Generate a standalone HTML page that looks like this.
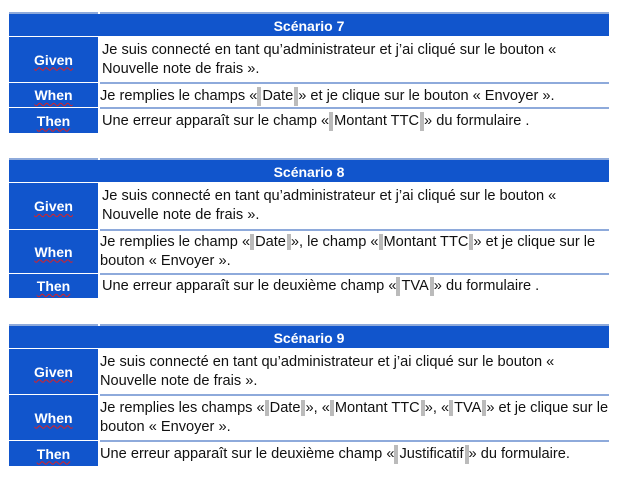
<!DOCTYPE html>
<html><head><meta charset="utf-8"><style>
body{margin:0;width:617px;height:483px;background:#fff;font-family:"Liberation Sans",sans-serif;position:relative;overflow:hidden}
.t{position:absolute;left:9px;width:600px}
.h{position:absolute;left:0;width:600px;height:24px;background:#1155cc;color:#fff;font-weight:bold;font-size:14px;text-align:center;line-height:24px;border-top:2px solid #8eaadb;box-sizing:border-box}
.h:before{content:"";position:absolute;left:89px;top:-2px;width:2px;height:2px;background:#fff}
.l{position:absolute;left:0;width:89px;background:#1155cc;color:#fff;font-weight:bold;font-size:14px;display:flex;align-items:center;justify-content:center}
.l span{text-decoration:underline wavy #e02020;text-decoration-thickness:1px;text-underline-offset:2px}
.c{position:absolute;left:91px;width:509px;font-size:14.6px;color:#111;line-height:19px;display:flex;align-items:center;padding-left:2px;box-sizing:border-box;white-space:nowrap}
.sep{position:absolute;left:91px;width:509px;height:2px;background:#8eaadb}
.f{border-left:4px solid #bbb;border-right:4px solid #bbb;padding:0 1px}
</style></head><body>

<div class="t" style="top:12px">
<div class="h" style="top:0">Scénario 7</div>
<div class="l" style="top:25px;height:45px"><span>Given</span></div>
<div class="c" style="top:25px;height:45px">Je suis connecté en tant qu’administrateur et j’ai cliqué sur le bouton «<br>Nouvelle note de frais ».</div>
<div class="sep" style="top:70px"></div>
<div class="l" style="top:71px;height:24px"><span>When</span></div>
<div class="c" style="top:72px;height:24px;padding-left:0">Je remplies le champs «<span class="f">Date</span>» et je clique sur le bouton « Envoyer ».</div>
<div class="sep" style="top:95px"></div>
<div class="l" style="top:96px;height:25px"><span>Then</span></div>
<div class="c" style="top:97px;height:24px">Une erreur apparaît sur le champ «<span class="f">Montant TTC</span>» du formulaire .</div>
</div>

<div class="t" style="top:158px">
<div class="h" style="top:0">Scénario 8</div>
<div class="l" style="top:25px;height:46px"><span>Given</span></div>
<div class="c" style="top:25px;height:46px">Je suis connecté en tant qu’administrateur et j’ai cliqué sur le bouton «<br>Nouvelle note de frais ».</div>
<div class="sep" style="top:71px"></div>
<div class="l" style="top:72px;height:43px"><span>When</span></div>
<div class="c" style="top:73px;height:42px;padding-left:0;display:block;padding-top:2px">Je remplies le champ «<span class="f">Date</span>», le champ «<span class="f">Montant TTC</span>» et je clique sur le<br>bouton « Envoyer ».</div>
<div class="sep" style="top:115px"></div>
<div class="l" style="top:116px;height:24px"><span>Then</span></div>
<div class="c" style="top:117px;height:23px">Une erreur apparaît sur le deuxième champ «<span class="f">TVA</span>» du formulaire .</div>
</div>

<div class="t" style="top:324px">
<div class="h" style="top:0">Scénario 9</div>
<div class="l" style="top:25px;height:45px"><span>Given</span></div>
<div class="c" style="top:25px;height:45px;padding-left:0">Je suis connecté en tant qu’administrateur et j’ai cliqué sur le bouton «<br>Nouvelle note de frais ».</div>
<div class="sep" style="top:70px"></div>
<div class="l" style="top:71px;height:45px"><span>When</span></div>
<div class="c" style="top:72px;height:44px;padding-left:0;display:block;padding-top:3px">Je remplies les champs «<span class="f">Date</span>», «<span class="f">Montant TTC</span>», «<span class="f">TVA</span>» et je clique sur le<br>bouton « Envoyer ».</div>
<div class="sep" style="top:116px"></div>
<div class="l" style="top:117px;height:25px"><span>Then</span></div>
<div class="c" style="top:118px;height:24px;padding-left:0">Une erreur apparaît sur le deuxième champ «<span class="f">Justificatif</span>» du formulaire.</div>
</div>

</body></html>
